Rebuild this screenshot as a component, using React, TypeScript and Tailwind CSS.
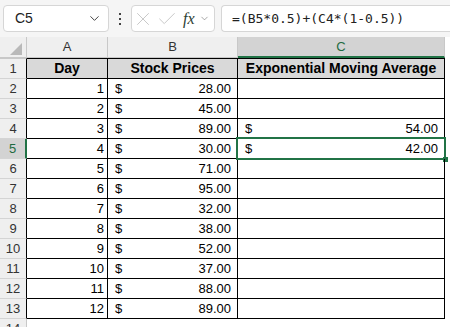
import React from 'react';
import { ChevronDown, X, Check } from 'lucide-react';

type Row = { day: number; price: number; ema: number | null };

const rows: Row[] = [
  { day: 1, price: 28, ema: null },
  { day: 2, price: 45, ema: null },
  { day: 3, price: 89, ema: 54 },
  { day: 4, price: 30, ema: 42 },
  { day: 5, price: 71, ema: null },
  { day: 6, price: 95, ema: null },
  { day: 7, price: 32, ema: null },
  { day: 8, price: 38, ema: null },
  { day: 9, price: 52, ema: null },
  { day: 10, price: 37, ema: null },
  { day: 11, price: 88, ema: null },
  { day: 12, price: 89, ema: null },
];

function Money({ value }: { value: number }) {
  return (
    <div className="flex w-full items-center justify-between pl-[7px] pr-[6px]">
      <span>$</span>
      <span>{value.toFixed(2)}</span>
    </div>
  );
}

export default function App() {
  return (
    <div className="h-[327px] w-[450px] overflow-hidden bg-white font-['Liberation_Sans',Arial,sans-serif] text-[13px] text-black">
      {/* formula bar */}
      <div className="flex h-[37px] items-start bg-[#f5f5f5] pl-[3px] pt-[5px]">
        <div className="flex h-[27px] w-[106px] items-center justify-between rounded-[4px] border border-[#d6d6d6] bg-white pl-[11px] pr-[6px]">
          <span className="text-[14px] text-[#222]">C5</span>
          <ChevronDown size={15} strokeWidth={1.6} className="text-[#444]" />
        </div>
        <div className="flex h-[27px] w-[22px] flex-col items-center justify-center gap-[3px]">
          <div className="h-[2px] w-[2px] bg-[#444]" />
          <div className="h-[2px] w-[2px] bg-[#444]" />
          <div className="h-[2px] w-[2px] bg-[#444]" />
        </div>
        <div className="flex h-[27px] w-[84px] items-center rounded-[4px] border border-[#d6d6d6] bg-white">
          <X size={22} strokeWidth={0.9} className="text-[#bdbdbd]" />
          <Check size={22} strokeWidth={0.9} className="ml-[2px] text-[#bdbdbd]" />
          <span className="ml-[5px] font-['Liberation_Serif',serif] text-[16px] italic leading-none text-[#2c3e33]">fx</span>
          <ChevronDown size={11} strokeWidth={1.4} className="ml-[4px] text-[#777]" />
        </div>
        <div className="ml-[6px] flex h-[27px] flex-1 items-center rounded-l-[4px] border border-r-0 border-[#d6d6d6] bg-white pl-[10px] font-['DejaVu_Sans_Mono',monospace] text-[13px] text-[#222]">
          =(B5*0.5)+(C4*(1-0.5))
        </div>
      </div>

      {/* column headers */}
      <div className="flex h-[21px] text-[#333]">
        <div className="relative w-[27px] border-b border-r border-[#c8c8c8] bg-[#efefef]">
          <svg width="12" height="12" viewBox="0 0 12 12" className="absolute bottom-[2px] right-[4px]">
            <polygon points="12,0 12,12 0,12" fill="#b9b9b9" />
          </svg>
        </div>
        <div className="flex w-[81px] items-center justify-center border-b border-r border-[#c8c8c8] bg-[#efefef]">A</div>
        <div className="flex w-[130px] items-center justify-center border-b border-r border-[#c8c8c8] bg-[#efefef]">B</div>
        <div className="flex w-[207px] items-center justify-center border-b-2 border-r border-b-[#217346] border-r-[#c8c8c8] bg-[#d3d3d3] text-[#1f6b41]">C</div>
        <div className="flex-1 bg-white" />
      </div>

      {/* title row */}
      <div className="flex h-[21px]">
        <div className="flex w-[27px] items-center justify-center border-b border-r border-t border-b-[#d4d4d4] border-r-black border-t-[#c8c8c8] bg-[#efefef] text-[#333]">1</div>
        <div className="flex w-[81px] items-center justify-center border-b border-r border-t border-black bg-[#d9d9d9] text-[14px] font-bold">Day</div>
        <div className="flex w-[130px] items-center justify-center border-b border-r border-t border-black bg-[#d9d9d9] text-[14px] font-bold">Stock Prices</div>
        <div className="flex w-[207px] items-center justify-center border-b border-r border-t border-black bg-[#d9d9d9] text-[14px] font-bold">Exponential Moving Average</div>
        <div className="flex-1" />
      </div>

      {/* data rows */}
      {rows.map((r, i) => {
        const n = i + 2;
        const sel = n === 5;
        return (
          <div key={n} className="flex h-[20px]">
            <div
              className={
                sel
                  ? 'flex w-[27px] items-center justify-center border-b border-r-2 border-b-[#d4d4d4] border-r-[#217346] bg-[#d3d3d3] text-[#1f6b41]'
                  : 'flex w-[27px] items-center justify-center border-b border-r border-b-[#d4d4d4] border-r-black bg-[#efefef] text-[#333]'
              }
            >
              {n}
            </div>
            <div className="flex w-[81px] items-center justify-end border-b border-r border-black pr-[3px]">{r.day}</div>
            <div className="flex w-[130px] items-center border-b border-r border-black">
              <Money value={r.price} />
            </div>
            <div className="relative flex w-[207px] items-center border-b border-r border-black">
              {r.ema !== null && <Money value={r.ema} />}
              {sel && (
                <div className="absolute -left-[2px] -top-[2px] bottom-[-2px] right-[-2px] border-2 border-[#217346]">
                  <div className="absolute bottom-[-4px] right-[-4px] h-[5px] w-[5px] bg-[#217346]" />
                </div>
              )}
            </div>
            <div className="flex-1" />
          </div>
        );
      })}

      {/* row 14, partly visible */}
      <div className="flex h-[20px]">
        <div className="flex w-[27px] items-center justify-center border-r border-[#c8c8c8] bg-[#efefef] text-[#333]">14</div>
        <div className="flex-1" />
      </div>
    </div>
  );
}
